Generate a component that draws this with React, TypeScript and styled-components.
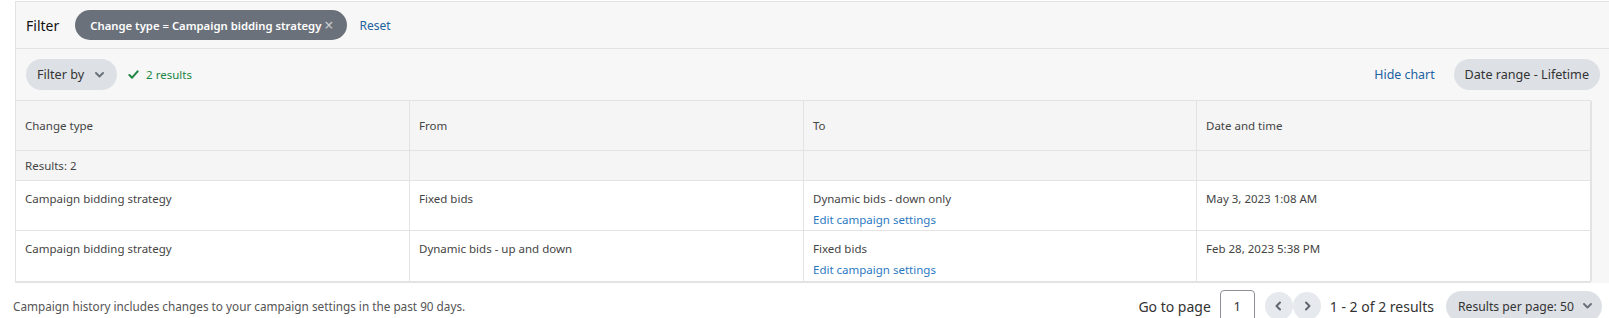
import React from 'react';
import styled, { createGlobalStyle } from 'styled-components';

const GlobalStyle = createGlobalStyle`
  html, body {
    margin: 0;
    padding: 0;
    background: #ffffff;
  }
  body {
    font-family: 'Noto Sans', 'Liberation Sans', Arial, sans-serif;
    color: #444444;
    overflow: hidden;
  }
`;

type THistoryRow = {
  id: number;
  changeType: string;
  from: string;
  to: string;
  date: string;
};

const rows: THistoryRow[] = [
  { id: 1, changeType: 'Campaign bidding strategy', from: 'Fixed bids', to: 'Dynamic bids - down only', date: 'May 3, 2023 1:08 AM' },
  { id: 2, changeType: 'Campaign bidding strategy', from: 'Dynamic bids - up and down', to: 'Fixed bids', date: 'Feb 28, 2023 5:38 PM' },
];

const columns = ['Change type', 'From', 'To', 'Date and time'];

const Chevron = ({ dir = 'down' }: { dir?: 'down' | 'left' | 'right' }) => {
  const d = dir === 'down' ? 'M3 5 L6.5 8.5 L10 5' : dir === 'left' ? 'M8 3.5 L4.5 7 L8 10.5' : 'M6 3.5 L9.5 7 L6 10.5';
  return (
    <svg width="13" height="14" viewBox="0 0 13 14">
      <path d={d} fill="none" stroke="currentColor" strokeWidth="2" strokeLinecap="round" strokeLinejoin="round" />
    </svg>
  );
};

const CheckIcon = () => (
  <svg width="11" height="11" viewBox="0 0 12 12">
    <path d="M1.5 6.5 L4.5 9.5 L10.5 2.5" fill="none" stroke="currentColor" strokeWidth="2.2" strokeLinecap="round" strokeLinejoin="round" />
  </svg>
);

const App = () => {
  return (
    <>
      <GlobalStyle />
      <Page>
        <Panel>
          <FilterBar>
            <FilterLabel>Filter</FilterLabel>
            <FilterChip>
              Change type = Campaign bidding strategy
              <ChipClose>×</ChipClose>
            </FilterChip>
            <LinkText>Reset</LinkText>
          </FilterBar>

          <Toolbar>
            <ToolbarGroup>
              <PillButton>
                Filter by
                <Chevron />
              </PillButton>
              <ResultsBadge>
                <CheckIcon />
                2 results
              </ResultsBadge>
            </ToolbarGroup>
            <ToolbarGroup>
              <LinkText>Hide chart</LinkText>
              <PillButton>Date range - Lifetime</PillButton>
            </ToolbarGroup>
          </Toolbar>

          <Table>
            {columns.map((c) => (
              <HeadCell key={c}>{c}</HeadCell>
            ))}
            <HeadCell />
            <SummaryCell>Results: 2</SummaryCell>
            <SummaryCell />
            <SummaryCell />
            <SummaryCell />
            <SummaryCell />
            {rows.map((r) => (
              <React.Fragment key={r.id}>
                <BodyCell>{r.changeType}</BodyCell>
                <BodyCell>{r.from}</BodyCell>
                <BodyCell>
                  <span>{r.to}</span>
                  <CellLink>Edit campaign settings</CellLink>
                </BodyCell>
                <BodyCell>{r.date}</BodyCell>
                <BodyCell />
              </React.Fragment>
            ))}
          </Table>
        </Panel>

        <Footer>
          <FooterNote>Campaign history includes changes to your campaign settings in the past 90 days.</FooterNote>
          <Pager>
            <span>Go to page</span>
            <PageInput>1</PageInput>
            <ArrowGroup>
              <ArrowButton><Chevron dir="left" /></ArrowButton>
              <ArrowButton><Chevron dir="right" /></ArrowButton>
            </ArrowGroup>
            <span>1 - 2 of 2 results</span>
            <PerPageButton>
              Results per page: 50
              <Chevron />
            </PerPageButton>
          </Pager>
        </Footer>
      </Page>
    </>
  );
};
export default App;

// --- Styled Components ---

const Page = styled.div`
  width: 1609px;
  height: 318px;
  padding-top: 1px;
  box-sizing: border-box;
  overflow: hidden;
`;

const Panel = styled.div`
  margin-left: 15px;
  width: 1600px;
  border-top: 1px solid #e3e3e3;
  border-left: 1px solid #e3e3e3;
  background: #f7f7f7;
`;

const FilterBar = styled.div`
  height: 46px;
  display: flex;
  align-items: center;
  padding-left: 10px;
  border-bottom: 1px solid #e3e3e3;
`;

const FilterLabel = styled.span`
  font-size: 14px;
  color: #111111;
  margin-right: 16px;
`;

const FilterChip = styled.span`
  display: inline-flex;
  align-items: center;
  height: 30px;
  padding: 0 13px 0 15px;
  border-radius: 15px;
  background: #6b717a;
  color: #ffffff;
  font-size: 11.3px;
  font-weight: 600;
  margin-right: 13px;
`;

const ChipClose = styled.span`
  font-size: 16px;
  font-weight: 400;
  color: #c9cdd2;
  margin-left: 3px;
  line-height: 1;
`;

const LinkText = styled.span`
  font-size: 12px;
  color: #2162a1;
`;

const Toolbar = styled.div`
  height: 51px;
  display: flex;
  align-items: center;
  justify-content: space-between;
  padding: 0 10px;
  width: 1574px;
`;

const ToolbarGroup = styled.div`
  display: flex;
  align-items: center;
  column-gap: 19px;
  ${LinkText} {
    font-size: 12.4px;
  }
  &:first-child {
    column-gap: 11px;
  }
`;

const PillButton = styled.span`
  display: inline-flex;
  align-items: center;
  column-gap: 9px;
  height: 31px;
  padding: 0 11px;
  border-radius: 16px;
  background: #dde1e6;
  color: #333333;
  font-size: 12.6px;
  svg {
    color: #6b717a;
  }
`;

const PerPageButton = styled(PillButton)`
  font-size: 12.2px;
  column-gap: 7px;
  padding: 0 8px 0 12px;
  margin-left: 3px;
`;

const ResultsBadge = styled.span`
  display: inline-flex;
  align-items: center;
  column-gap: 7px;
  color: #208542;
  font-size: 11.5px;
`;

const Table = styled.div`
  display: grid;
  grid-template-columns: 394px 394px 393px 394px 1fr;
  width: 1575px;
  background: #ffffff;
  border-top: 1px solid #e3e3e3;
  border-bottom: 2px solid #e3e3e3;
  font-size: 11.5px;
  color: #444444;
`;

const Cell = styled.div`
  box-sizing: border-box;
  padding: 0 9px;
  border-right: 1px solid #e3e3e3;
  border-bottom: 1px solid #e3e3e3;
  &:nth-child(5n) {
    padding: 0;
  }
`;

const HeadCell = styled(Cell)`
  height: 50px;
  display: flex;
  align-items: center;
  background: #f5f5f5;
`;

const SummaryCell = styled(Cell)`
  height: 30px;
  display: flex;
  align-items: center;
  background: #f5f5f5;
`;

const BodyCell = styled(Cell)`
  height: 50px;
  padding-top: 9px;
  display: flex;
  flex-direction: column;
  row-gap: 4px;
  line-height: 17px;
  &:nth-last-child(-n + 5) {
    border-bottom: none;
  }
`;

const CellLink = styled.span`
  color: #2b79c2;
`;

const Footer = styled.div`
  display: flex;
  align-items: center;
  justify-content: space-between;
  padding: 7px 7px 0 13px;
`;

const FooterNote = styled.span`
  font-size: 11.75px;
  color: #555555;
`;

const Pager = styled.div`
  display: flex;
  align-items: center;
  font-size: 14px;
  color: #333333;
  column-gap: 9px;
`;

const PageInput = styled.span`
  box-sizing: border-box;
  width: 35px;
  height: 32px;
  border: 1px solid #8d9096;
  border-radius: 4px;
  display: flex;
  align-items: center;
  justify-content: center;
  background: #ffffff;
  font-size: 13px;
  margin-right: 1px;
`;

const ArrowGroup = styled.div`
  display: flex;
`;

const ArrowButton = styled.span`
  width: 28px;
  height: 28px;
  border-radius: 50%;
  background: #e6e9ed;
  display: flex;
  align-items: center;
  justify-content: center;
  color: #5f6670;
`;
